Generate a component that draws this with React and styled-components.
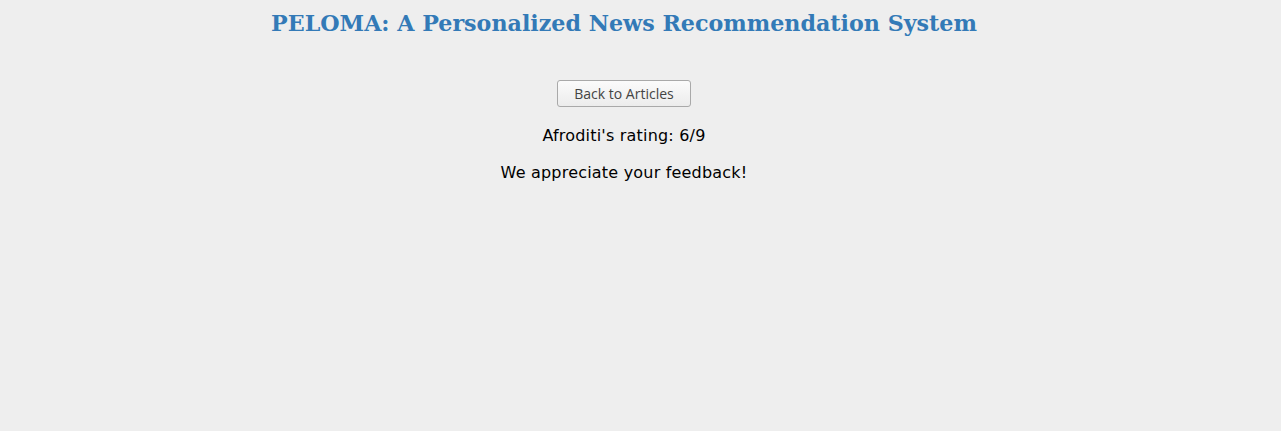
import React from 'react';
import styled, { createGlobalStyle } from 'styled-components';

const GlobalStyle = createGlobalStyle`
  html, body {
    margin: 0;
    background: #eeeeee;
  }
  body {
    padding: 0 41px 0 8px;
    font-family: "DejaVu Sans", Verdana, sans-serif;
  }
`;

const Page = styled.div`
  display: flex;
  flex-direction: column;
  align-items: center;
`;

const Title = styled.h1`
  margin: 8px 0 0;
  font-family: "DejaVu Serif", Georgia, serif;
  font-size: 22.2px;
  font-weight: bold;
  color: #337ab7;
  line-height: 30px;
`;

const Button = styled.button`
  margin-top: 42px;
  height: 27px;
  padding: 0 16px;
  font-family: "Open Sans", "DejaVu Sans", sans-serif;
  font-size: 14px;
  color: #444;
  background: linear-gradient(#fbfbfb, #ececec);
  border: 1px solid #a9a9a9;
  border-radius: 3px;
  cursor: pointer;
`;

const Text = styled.p`
  margin: ${props => props.marginTop || '19px'} 0 0;
  font-size: 16px;
  letter-spacing: 0.2px;
  line-height: 19px;
  color: #000;
`;

export default function App() {
  return (
    <Page>
      <GlobalStyle />
      <Title>PELOMA: A Personalized News Recommendation System</Title>
      <Button>Back to Articles</Button>
      <Text>Afroditi's rating: 6/9</Text>
      <Text marginTop="18px">We appreciate your feedback!</Text>
    </Page>
  );
}
